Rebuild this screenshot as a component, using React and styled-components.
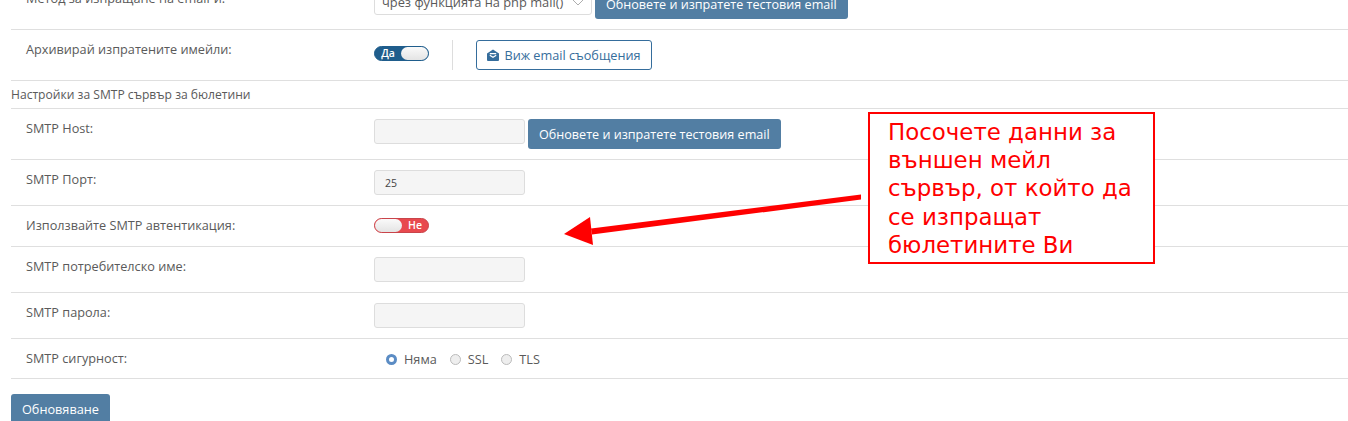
import styled, { createGlobalStyle } from 'styled-components'

const GlobalStyle = createGlobalStyle`
html, body {
    margin: 0;
    height: 421px;
    overflow: hidden;
    background: #ffffff;
}
`;

const Page = styled.div`
position: relative;
margin-top: -21px;
font-family: 'Open Sans', sans-serif;
font-size: 12.7px;
color: #5a5a5a;
`;
const Section = styled.div`
padding-left: 11px;
`;
const Row = styled.div`
display: flex;
align-items: flex-start;
padding: 10px 0 ${(props) => props.$bottom || 10}px 15px;
border-bottom: 1px solid #dfdfdf;
`;
const Label = styled.div`
width: 348px;
flex-shrink: 0;
line-height: 18px;
`;
const Controls = styled.div`
display: flex;
align-items: flex-start;
min-height: 20px;
`;
const Heading = styled.div`
padding: 5px 0 4px;
line-height: 18px;
font-size: 12.1px;
border-bottom: 1px solid #dfdfdf;
`;
const Select = styled.div`
box-sizing: border-box;
width: 218px;
height: 26px;
padding: 0 7px;
display: flex;
align-items: center;
justify-content: space-between;
border: 1px solid #dddddd;
border-radius: 3px;
font-size: 12.85px;
`;
const Input = styled.div`
box-sizing: border-box;
width: 151px;
height: 25px;
padding: 0 10px;
display: flex;
align-items: center;
background: #f5f5f5;
border: 1px solid #dddddd;
border-radius: 3px;
font-size: 10.5px;
line-height: 22px;
color: #444444;
`;
const Button = styled.button`
height: 30px;
margin-left: 3px;
padding: 0 11px;
font-family: inherit;
font-size: 12.6px;
color: #ffffff;
background: #527ea3;
border: none;
border-radius: 3px;
`;
const SaveButton = styled(Button)`
display: block;
margin: 15px 0 0;
font-size: 12.7px;
`;
const Toggle = styled.div`
box-sizing: border-box;
width: 55px;
height: 15px;
margin-top: ${(props) => props.$top || 0}px;
display: flex;
align-items: center;
flex-direction: ${(props) => (props.$on ? 'row' : 'row-reverse')};
border-radius: 8px;
border: 1px solid ${(props) => (props.$on ? '#1f5d8c' : '#c9444a')};
background: ${(props) => (props.$on ? '#1f5d8c' : '#e8494e')};
color: #ffffff;
font-size: 10.5px;
font-weight: 600;
line-height: 13px;
`;
const ToggleText = styled.span`
flex: 1;
text-align: center;
`;
const Knob = styled.span`
width: 27px;
height: 13px;
border-radius: 7px;
background: linear-gradient(#fafafa, #e4e4e4);
`;
const Divider = styled.div`
width: 1px;
height: 30px;
margin: 0 23px;
background: #dddddd;
`;
const OutlineButton = styled.button`
height: 30px;
width: 176px;
padding: 0;
display: flex;
align-items: center;
justify-content: center;
gap: 5px;
font-family: inherit;
font-size: 12.7px;
color: #356d9c;
background: #ffffff;
border: 1px solid #356d9c;
border-radius: 3px;
`;
const RadioGroup = styled.div`
display: flex;
align-items: center;
gap: 13px;
padding-left: 12px;
line-height: 20px;
`;
const RadioItem = styled.div`
display: flex;
align-items: center;
gap: 7px;
`;
const RadioDot = styled.span`
box-sizing: border-box;
width: 11px;
height: 11px;
border-radius: 50%;
border: ${(props) => (props.$checked ? '3px solid #5b8cc4' : '1px solid #bbbbbb')};
background: ${(props) => (props.$checked ? '#ffffff' : '#eeeeee')};
`;
const Note = styled.div`
position: absolute;
left: 868px;
top: 133px;
box-sizing: border-box;
width: 287px;
height: 152px;
padding: 4px 17px 0 18px;
border: 2px solid #ff0000;
background: #ffffff;
color: #ff0000;
font-family: 'DejaVu Sans', sans-serif;
font-size: 22.9px;
line-height: 28.2px;
`;
const Arrow = styled.svg`
position: absolute;
left: 560px;
top: 211px;
`;

const EnvelopeIcon = () => (
    <svg width="12" height="12" viewBox="0 0 12 12">
        <path d="M6 0.5 L12 4.6 V11 a1 1 0 0 1 -1 1 H1 a1 1 0 0 1 -1 -1 V4.6 Z" fill="#356d9c" />
        <path d="M2.8 4.6 H9.2 M2.8 6.3 L6 8.2 L9.2 6.3" stroke="#ffffff" strokeWidth="1.2" fill="none" />
    </svg>
);

const Chevron = () => (
    <svg width="12" height="7" viewBox="0 0 12 7">
        <path d="M1 1 L6 6 L11 1" stroke="#999999" strokeWidth="0.8" fill="none" />
    </svg>
);

const App = () => {
    return (
        <Page>
            <GlobalStyle />
            <Section>
                <Row>
                    <Label>Метод за изпращане на email-и:</Label>
                    <Controls>
                        <Select>чрез функцията на php mail()<Chevron /></Select>
                        <Button>Обновете и изпратете тестовия email</Button>
                    </Controls>
                </Row>
                <Row>
                    <Label>Архивирай изпратените имейли:</Label>
                    <Controls>
                        <Toggle $on $top={6}><ToggleText>Да</ToggleText><Knob /></Toggle>
                        <Divider />
                        <OutlineButton><EnvelopeIcon />Виж email съобщения</OutlineButton>
                    </Controls>
                </Row>
                <Heading>Настройки за SMTP сървър за бюлетини</Heading>
                <Row>
                    <Label>SMTP Host:</Label>
                    <Controls>
                        <Input />
                        <Button>Обновете и изпратете тестовия email</Button>
                    </Controls>
                </Row>
                <Row>
                    <Label>SMTP Порт:</Label>
                    <Controls><Input>25</Input></Controls>
                </Row>
                <Row>
                    <Label>Използвайте SMTP автентикация:</Label>
                    <Controls>
                        <Toggle $top={2}><ToggleText>Не</ToggleText><Knob /></Toggle>
                    </Controls>
                </Row>
                <Row>
                    <Label>SMTP потребителско име:</Label>
                    <Controls><Input /></Controls>
                </Row>
                <Row>
                    <Label>SMTP парола:</Label>
                    <Controls><Input /></Controls>
                </Row>
                <Row $bottom={9}>
                    <Label>SMTP сигурност:</Label>
                    <RadioGroup>
                        <RadioItem><RadioDot $checked />Няма</RadioItem>
                        <RadioItem><RadioDot />SSL</RadioItem>
                        <RadioItem><RadioDot />TLS</RadioItem>
                    </RadioGroup>
                </Row>
                <SaveButton>Обновяване</SaveButton>
            </Section>
            <Arrow width="310" height="60" viewBox="0 0 310 60">
                <path d="M301 4.5 L301 9.5 L32 44.5 L31 38.5 Z" fill="#ff0000" />
                <path d="M4 44 L30 27 L33 55 Z" fill="#ff0000" />
            </Arrow>
            <Note>Посочете данни за външен мейл сървър, от който да се изпращат бюлетините Ви</Note>
        </Page>
    )
}

export default App
